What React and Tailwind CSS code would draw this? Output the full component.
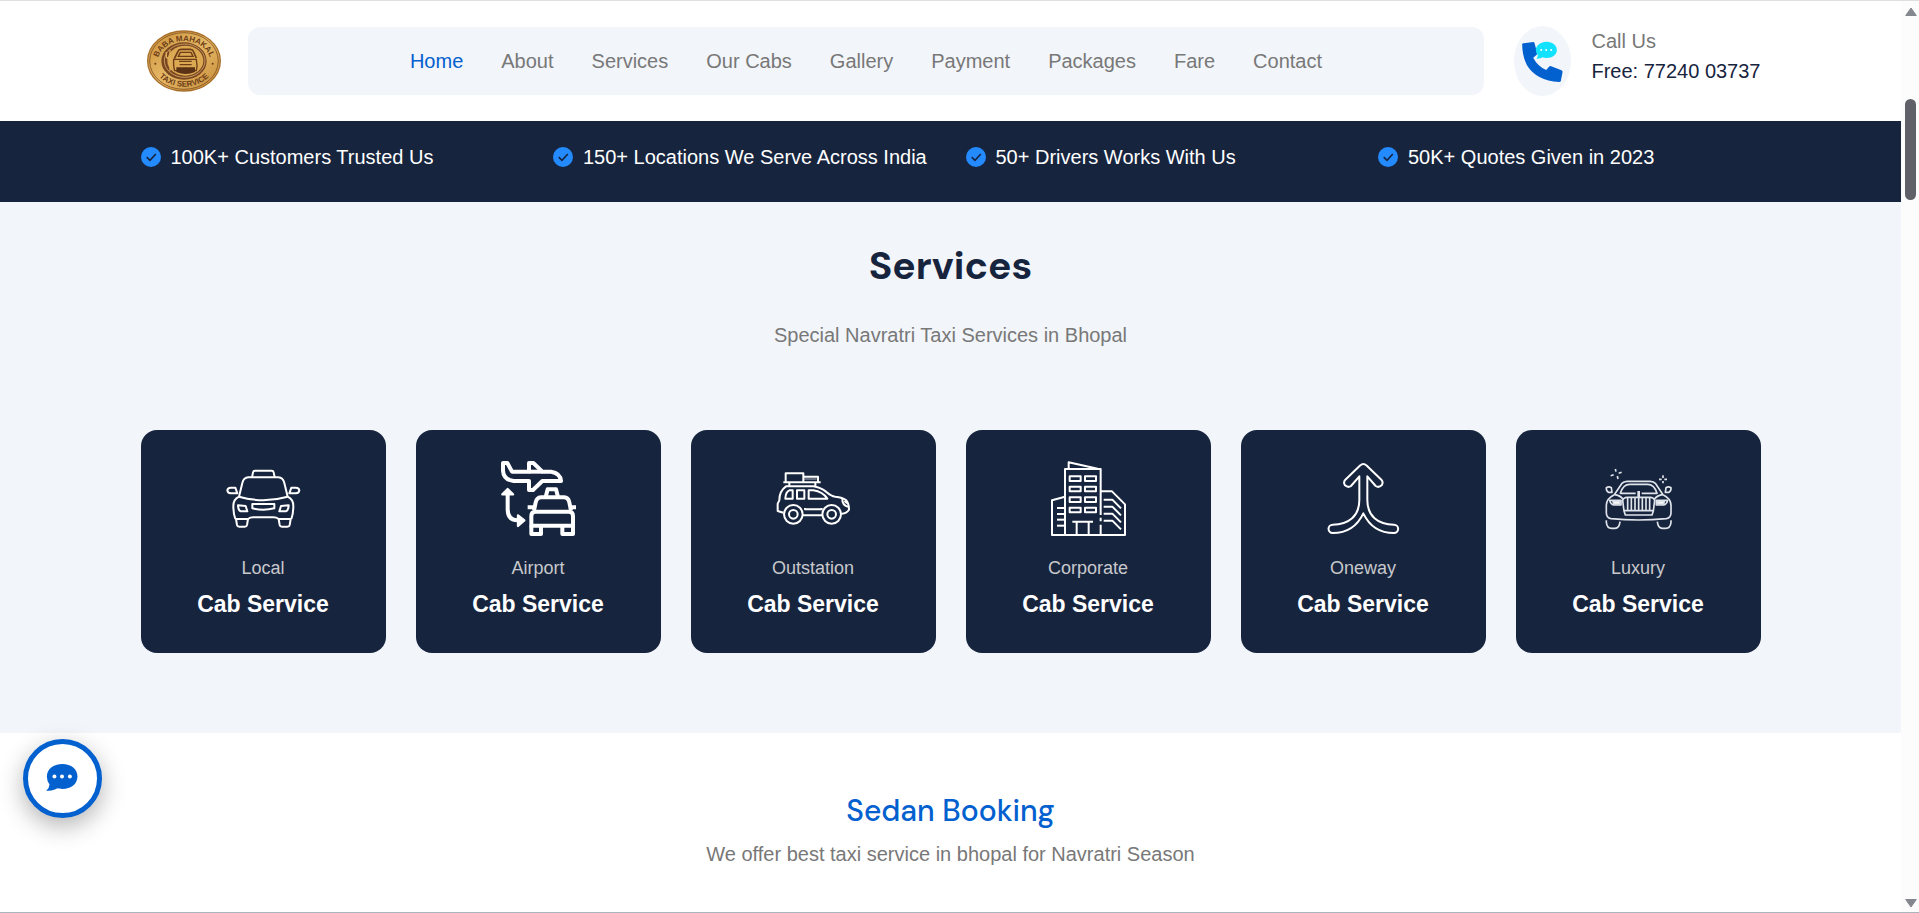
import React from "react";

const navLinks = [
  "Home",
  "About",
  "Services",
  "Our Cabs",
  "Gallery",
  "Payment",
  "Packages",
  "Fare",
  "Contact",
];

const highlights = [
  "100K+ Customers Trusted Us",
  "150+ Locations We Serve Across India",
  "50+ Drivers Works With Us",
  "50K+ Quotes Given in 2023",
];

const services = [
  { name: "Local", icon: LocalIcon },
  { name: "Airport", icon: AirportIcon },
  { name: "Outstation", icon: OutstationIcon },
  { name: "Corporate", icon: CorporateIcon },
  { name: "Oneway", icon: OnewayIcon },
  { name: "Luxury", icon: LuxuryIcon },
];

function IconBase({ strokeWidth = 6, children }) {
  return (
    <svg
      viewBox="0 0 225 225"
      className="size-[75px]"
      fill="none"
      stroke="#fff"
      strokeWidth={strokeWidth}
      strokeLinejoin="round"
      aria-hidden="true"
    >
      {children}
    </svg>
  );
}

// Draws its children twice, the second time flipped around the icon's middle
function Mirrored({ children }) {
  return (
    <>
      {children}
      <g transform="translate(224 0) scale(-1 1)">{children}</g>
    </>
  );
}

function LocalIcon() {
  return (
    <IconBase>
      <path d="M78 49L81 34Q82 29 87 29H137Q142 29 143 34L146 49" />
      <path d="M39 107L49 66Q53 50 67 49H157Q171 50 175 66L185 107" />
      <path d="M39 107Q112 128 185 107" />
      <path d="M79 129H145V142Q112 150 79 142Z" />
      <path d="M28 174H66Q72 169 82 169H142Q152 169 158 174H196" />
      <Mirrored>
        <path d="M4 88Q5 80 14 80H28L34 97H14Q5 96 4 88Z" />
        <path d="M39 107Q22 115 22 135Q22 158 28 174" />
        <path d="M30 174L33 192Q34 197 40 197H56Q62 197 63 192L66 174" />
        <path d="M36 133L59 135L64 151H44Q37 149 36 133Z" />
      </Mirrored>
    </IconBase>
  );
}

function AirportIcon() {
  return (
    <IconBase strokeWidth={12}>
      <path d="M6 6H19L33 32H84V6H97L124 32H150Q178 36 180 60H124L96 87H84V60H38Q7 56 6 28Z" />
      <path d="M84 32H124" />
      <path d="M134 108L140 85H165L171 108" />
      <path d="M99 149L104 124Q107 110 120 109H189Q202 110 205 124L210 149" />
      <path d="M80 139H98M208 139H225" />
      <path d="M91 194V165Q91 152 104 152H203Q216 152 216 165V194Z" />
      <path d="M91 194V219H120V194M184 194V219H216V194" />
      <path d="M20 90V145Q20 178 50 178H66" />
      <path d="M4 100L20 84L36 100ZM51 163L70 178L51 195Z" fill="#fff" strokeWidth={7} />
    </IconBase>
  );
}

function OutstationIcon() {
  return (
    <IconBase>
      <path d="M29 63V37H82V63M82 47H126V63" />
      <path d="M82 54H122" strokeWidth={2} />
      <path d="M22 64H134M40 64V76M118 64V76" />
      <path d="M22 155L5 150V128L10 118Q10 90 30 76H112Q133 79 150 92Q165 105 178 107Q200 109 211 118Q219 128 219 146Q212 157 197 158" />
      <path d="M28 113Q29 92 40 88H50V113ZM63 88H85V113H63ZM98 88H112Q140 92 154 113H98Z" />
      <path d="M199 113Q198 133 216 137M206 119Q210 126 216 128" />
      <path d="M81 163H138M87 141V145H137V141" />
      <circle cx="52" cy="160" r="28" />
      <circle cx="52" cy="160" r="13" />
      <circle cx="167" cy="160" r="28" />
      <circle cx="167" cy="160" r="13" />
    </IconBase>
  );
}

function CorporateIcon() {
  return (
    <IconBase>
      <path d="M42 107L3 118V222H222V130L183 91H150" />
      <path d="M42 222V24H149V162M149 170V181M149 191V222" />
      <path d="M53 22V4L140 23" />
      {[46, 77, 109, 140].map((y) => (
        <g key={y}>
          <rect x="56" y={y} width="33" height="14" />
          <rect x="102" y={y} width="33" height="14" />
        </g>
      ))}
      {[141, 159, 176, 194].map((y) => (
        <path key={y} d={`M18 ${y}H42`} />
      ))}
      {[116, 137, 158, 179].map((y) => (
        <path key={y} d={`M158 ${y}H184L210 ${y + 26}`} />
      ))}
      <path d="M64 182H126M77 182V222M113 182V222" />
    </IconBase>
  );
}

function OnewayIcon() {
  return (
    <IconBase>
      <path d="M112 9Q117 9 121 13L166 56Q173 64 167 73Q158 81 149 75L124 46V117C124 165 155 191 204 191A12 12 0 0 1 204 216C160 216 130 195 112 157C94 195 64 216 20 216A12 12 0 0 1 20 191C69 191 100 165 100 117V46L75 75Q66 81 57 73Q51 64 58 56L103 13Q107 9 112 9Z" />
    </IconBase>
  );
}

function LuxuryIcon() {
  return (
    <IconBase strokeWidth={5}>
      <g stroke="#dfe3ea">
        <path d="M40 101L62 68Q68 61 78 61H148Q158 61 164 68L186 101" />
        <path d="M104 97H58Q66 70 86 70H140Q160 70 168 97H122" />
        <path d="M113 90V108" strokeWidth={8} />
        <path d="M65 118Q68 109 78 109H148Q158 109 161 118L157 150L153 162H73L69 150Z" />
        <path d="M69 149H157M80 110V149M91 110V149M102 110V149M113 110V149M124 110V149M135 110V149M146 110V149" />
        <path d="M40 101Q17 112 16 132V155Q16 170 30 173Q112 181 196 173Q210 170 210 155V132Q209 112 186 101" />
        <path d="M40 101Q58 103 66 115M186 101Q168 103 160 115" />
        <path d="M26 118H60V132H38Q29 130 26 118ZM200 118H166V132H188Q197 130 200 118Z" />
        <path d="M36 121H56V129H38ZM190 121H170V129H188Z" fill="#fff" />
        <path d="M16 80Q24 75 31 80L33 94H22Q15 90 16 80ZM210 80Q202 75 195 80L193 94H204Q211 90 210 80Z" />
        <path d="M16 178V184Q18 202 32 202H42Q55 202 57 182M210 178V184Q208 202 194 202H184Q171 202 169 182" />
        <path d="M43 24L45 32M49 45L51 54M29 44L38 41M53 37L62 34" />
        <path d="M186 43V51M186 60V67M174 55H182M190 55H198" />
      </g>
    </IconBase>
  );
}

function Logo() {
  return (
    <svg viewBox="0 0 222 186" className="ml-1.5 h-[62px] w-[74px] shrink-0" role="img" aria-label="Baba Mahakal Taxi Service">
      <defs>
        <linearGradient id="gold" x1="0" y1="0" x2="1" y2="1">
          <stop offset="0" stopColor="#c98f38" />
          <stop offset="0.5" stopColor="#e6b866" />
          <stop offset="1" stopColor="#c58a36" />
        </linearGradient>
        <path id="logo-top" d="M32 97A79 64 0 0 1 190 97" />
        <path id="logo-bottom" d="M17 93A94 77 0 0 0 205 93" />
      </defs>
      <ellipse cx="111" cy="93" rx="109" ry="90" fill="url(#gold)" stroke="#a8702a" strokeWidth="4" />
      <ellipse cx="111" cy="93" rx="103" ry="85" fill="none" stroke="#6d3d18" strokeWidth="2" />
      <ellipse cx="111" cy="93" rx="68" ry="56" fill="#7a4720" />
      <ellipse cx="113" cy="92" rx="61" ry="50" fill="none" stroke="#e8c078" strokeWidth="2" />
      <ellipse cx="115" cy="92" rx="54" ry="45" fill="#dba952" />
      <g fontFamily="Liberation Sans, Arial, sans-serif" fontWeight="700" fontSize="24" fill="#6d3d18" textAnchor="middle">
        <text>
          <textPath href="#logo-top" startOffset="50%">
            BABA MAHAKAL
          </textPath>
        </text>
        <text>
          <textPath href="#logo-bottom" startOffset="50%">
            TAXI SERVICE
          </textPath>
        </text>
      </g>
      <g fill="none" stroke="#6d3d18" strokeWidth="5">
        <path d="M58 66V82Q69 92 80 82V66M69 60V122" stroke="#e0ae58" strokeWidth="4" />
        <path d="M82 86L93 64Q95 58 102 58H130Q137 58 139 64L148 84" />
        <path d="M94 79L100 67H132L138 79Z" strokeWidth="4" />
        <path d="M80 88Q79 110 83 122H148Q152 108 148 88ZM96 94H134M98 104H134" strokeWidth="4" />
      </g>
      <path d="M88 112H144V126Q116 138 88 126Z" fill="#5a3215" />
      <circle cx="25" cy="101" r="3" fill="#6d3d18" />
      <circle cx="197" cy="101" r="3" fill="#6d3d18" />
    </svg>
  );
}

function CallIcon() {
  return (
    <svg viewBox="0 0 122 123" className="size-[41px]" aria-hidden="true">
      <path
        d="M0 10Q0 7 4 7L33 3Q36 3 37 6L45 36Q46 40 42 43L33 50Q46 75 72 87L80 78Q83 74 87 76L118 88Q122 90 121 94L116 120Q115 123 111 123Q42 119 14 72Q0 44 0 10Z"
        fill="#0360cf"
      />
      <path d="M73 2C92 2 104 13 104 27S91 51 73 51C68 51 64 50 60 49C55 53 49 54 43 53Q47 49 47 42Q41 36 41 27C41 13 55 2 73 2Z" fill="#13e2ff" />
      <g fill="#fff">
        <circle cx="57" cy="27" r="3" />
        <circle cx="72" cy="27" r="3" />
        <circle cx="87" cy="27" r="3" />
      </g>
    </svg>
  );
}

function CheckIcon() {
  return (
    <svg viewBox="0 0 20 20" className="size-5 shrink-0" aria-hidden="true">
      <circle cx="10" cy="10" r="10" fill="#238aff" />
      <path d="M5.7 10.2L9 13.3L14.8 7" fill="none" stroke="#17243e" strokeWidth="1.6" />
    </svg>
  );
}

function Header() {
  return (
    <header className="border-t border-[#dedfe0] bg-white">
      <div className="mx-auto flex h-[120px] max-w-[1620px] items-center">
        <a href="#home">
          <Logo />
        </a>
        <nav className="ml-[27px] flex h-[68px] flex-1 items-center justify-center gap-[38px] rounded-xl bg-[#f2f5fa]">
          {navLinks.map((link, index) => (
            <a
              key={link}
              href={`#${link.toLowerCase().replace(" ", "-")}`}
              className={index === 0 ? "text-[#0360cf]" : "text-[#787878] hover:text-[#0360cf]"}
            >
              {link}
            </a>
          ))}
        </nav>
        <div className="ml-[30px] flex items-center gap-5">
          <div className="flex h-[70px] w-[57px] items-center justify-center rounded-[50%] bg-[#f2f5fa]">
            <CallIcon />
          </div>
          <div className="pb-[11px]">
            <p className="text-[#787878]">Call Us</p>
            <a href="tel:7724003737" className="block text-[#17243e]">
              Free: 77240 03737
            </a>
          </div>
        </div>
      </div>
    </header>
  );
}

function Highlights() {
  return (
    <div className="bg-[#17243e] pt-[21px] pb-[30px]">
      <ul className="mx-auto grid max-w-[1620px] grid-cols-4 gap-[30px] text-white">
        {highlights.map((text) => (
          <li key={text} className="flex items-center gap-2.5 whitespace-nowrap">
            <CheckIcon />
            {text}
          </li>
        ))}
      </ul>
    </div>
  );
}

function Services() {
  return (
    <section className="bg-[#f2f5fa] pt-[34px] pb-20 text-center">
      <h2 className="font-['DM_Sans',Lato,sans-serif] text-[39px] leading-[60px] font-bold text-[#17243e]">
        Services
      </h2>
      <p className="mt-6 text-[#787878]">Special Navratri Taxi Services in Bhopal</p>
      <div className="mx-auto mt-20 grid max-w-[1620px] grid-cols-6 gap-[30px]">
        {services.map(({ name, icon: Icon }) => (
          <a
            key={name}
            href={`#${name.toLowerCase()}`}
            className="flex flex-col items-center rounded-2xl bg-[#17243e] pt-[31px] pb-[30px]"
          >
            <Icon />
            <span className="mt-[15px] text-lg leading-[34px] text-[#c8c9cc]">{name}</span>
            <span className="text-[23px] leading-[38px] font-bold text-white">Cab Service</span>
          </a>
        ))}
      </div>
    </section>
  );
}

function SedanBooking() {
  return (
    <section className="flex-1 border-b border-[#a9b4bd] bg-white pt-[58px] text-center">
      <h2 className="font-['DM_Sans',Lato,sans-serif] text-[30px] leading-10 font-medium text-[#0360cf]">
        Sedan Booking
      </h2>
      <p className="mt-2 text-[#787878]">We offer best taxi service in bhopal for Navratri Season</p>
    </section>
  );
}

function ChatButton() {
  return (
    <button
      type="button"
      aria-label="Chat with us"
      className="fixed bottom-[95px] left-[23px] flex size-[79px] items-center justify-center rounded-full border-[5px] border-[#0360cf] bg-white pr-0.5 pb-0.5 shadow-[0_8px_24px_rgba(0,0,0,0.3)]"
    >
      <svg viewBox="0 0 96 82" className="h-[27px] w-8" aria-hidden="true">
        <path d="M49 0C76 0 95 16 95 38S76 76 49 76C44 76 38 75 34 74C25 80 12 83 0 81Q10 72 10 62Q2 52 2 38C2 16 22 0 49 0Z" fill="#0360cf" />
        <g fill="#fff">
          <circle cx="25" cy="38" r="6" />
          <circle cx="48" cy="38" r="6" />
          <circle cx="72" cy="38" r="6" />
        </g>
      </svg>
    </button>
  );
}

function ScrollBar() {
  return (
    <div className="flex w-[18px] shrink-0 flex-col items-center border-y border-t-[#dedfe0] border-b-[#a9b4bd] bg-[#fcfcfc] pt-1.5 pb-1 pl-px" aria-hidden="true">
      <svg viewBox="0 0 12 10" className="h-2.5 w-3 shrink-0">
        <path d="M6 1L11.3 8.5H0.7Z" fill="#85878e" stroke="#85878e" strokeLinejoin="round" />
      </svg>
      <div className="mt-[82px] h-[101px] w-[11px] shrink-0 rounded-full bg-[#606168]" />
      <svg viewBox="0 0 12 10" className="mt-auto h-2.5 w-3 shrink-0">
        <path d="M6 9L11.3 1.5H0.7Z" fill="#85878e" stroke="#85878e" strokeLinejoin="round" />
      </svg>
    </div>
  );
}

export default function App() {
  return (
    <div className="flex min-h-screen font-['Liberation_Sans',Arial,sans-serif] text-xl leading-[30px]">
      <div className="flex flex-1 flex-col">
        <Header />
        <Highlights />
        <Services />
        <SedanBooking />
      </div>
      <ScrollBar />
      <ChatButton />
    </div>
  );
}
